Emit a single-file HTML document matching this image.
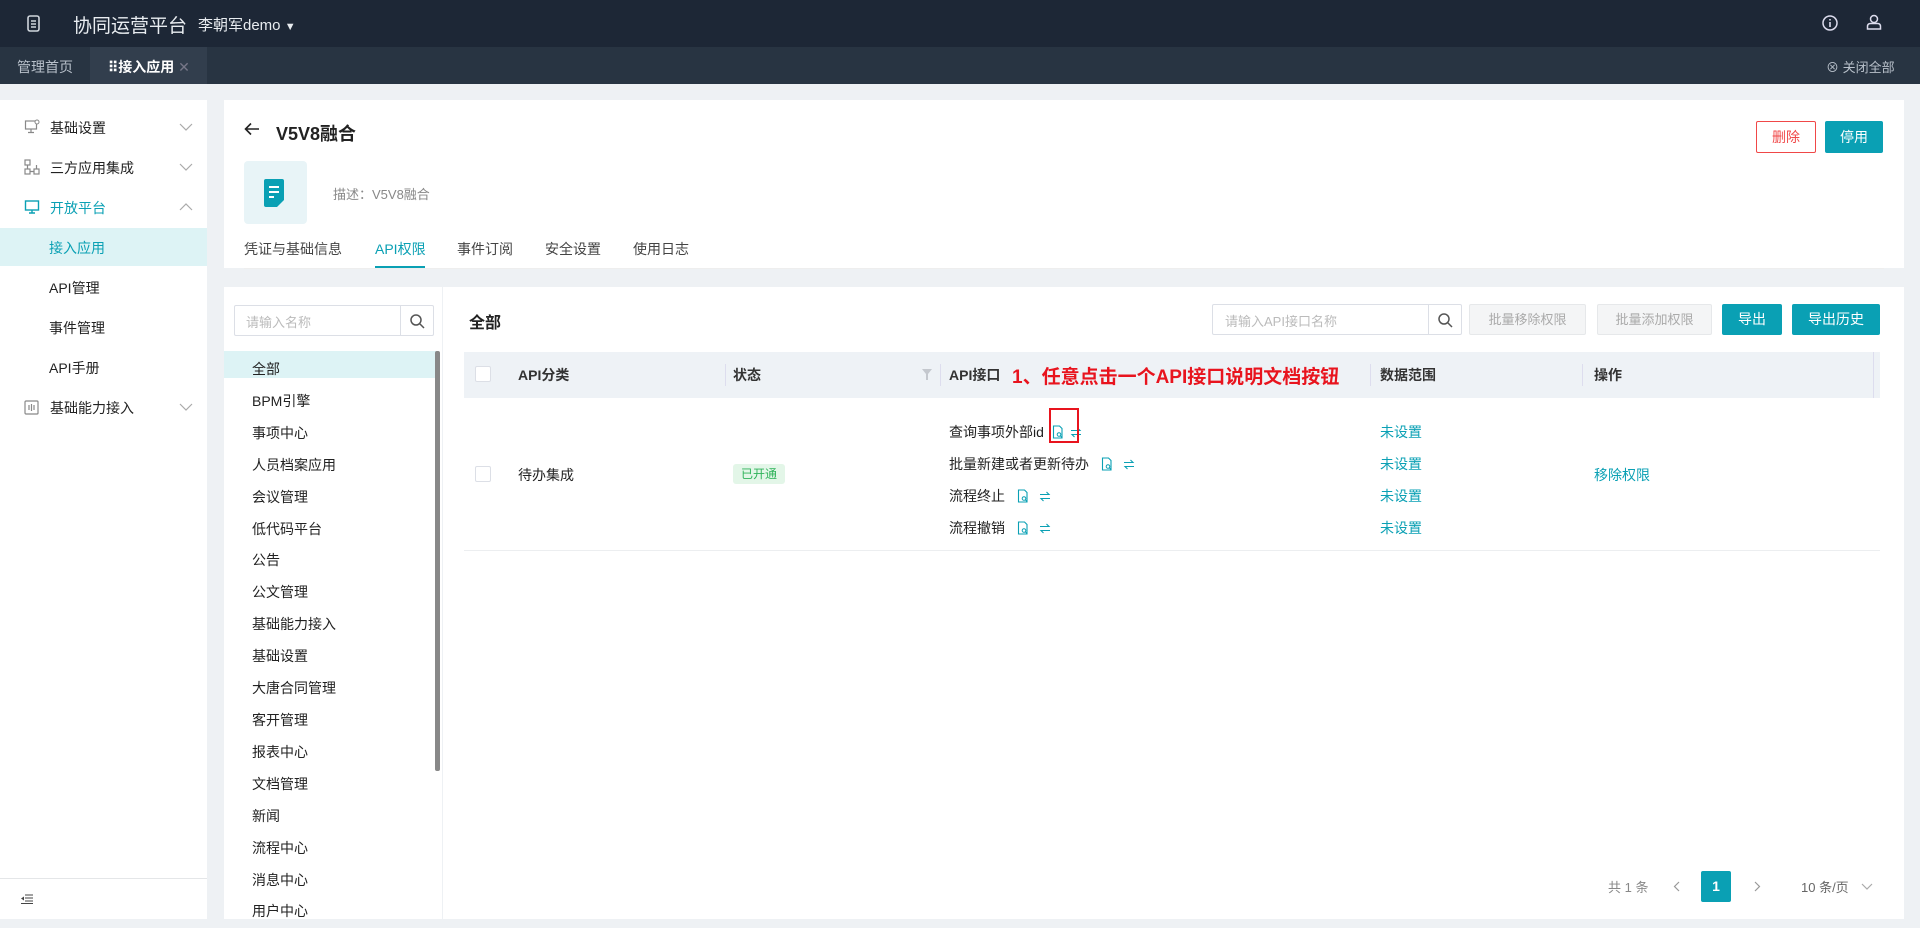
<!DOCTYPE html>
<html><head><meta charset="utf-8">
<style>
*{margin:0;padding:0;box-sizing:border-box}
body{width:1920px;height:919px;overflow:hidden;background:#eef1f4;font-family:"Liberation Sans","Noto Sans CJK SC",sans-serif;font-size:14px;color:#222;position:relative}
.a{position:absolute;white-space:nowrap}
.teal{color:#0aa0b4}
.btn{position:absolute;border-radius:2px;text-align:center;font-size:14px}
.ic{display:inline-block;vertical-align:-2px}
</style></head><body>
<svg width="0" height="0" style="position:absolute"><defs>
<g id="doc"><path d="M1.5 1h6l2.5 2.5V13h-8.5z" fill="none" stroke="#0aa0b4" stroke-width="1.1"/><circle cx="7" cy="9.5" r="1.8" fill="none" stroke="#0aa0b4" stroke-width="1"/><path d="M8.3 10.8l1.7 1.7" stroke="#0aa0b4"/></g>
<g id="sw"><path d="M1 4.5h9l-2.5-2.5M11 8.5H2l2.5 2.5" fill="none" stroke="#0aa0b4" stroke-width="1.1"/></g>
<g id="chd"><path d="M1 1l6 6 6-6" fill="none" stroke="#aaa" stroke-width="1.2"/></g>
<g id="chu"><path d="M1 7l6-6 6 6" fill="none" stroke="#aaa" stroke-width="1.2"/></g>
</defs></svg>
<!-- top bar -->
<div class="a" style="left:0;top:0;width:1920px;height:47px;background:#1d2736"></div>
<svg class="a" style="left:26px;top:15px" width="16" height="18" viewBox="0 0 16 18"><rect x="2" y="1" width="11" height="15" rx="2" fill="none" stroke="#cfd5dc" stroke-width="1.6"/><path d="M5 6h5M5 9h5M5 12h5" stroke="#cfd5dc" stroke-width="1.5"/></svg>
<div class="a" style="left:73px;top:11px;font-size:19px;color:#e8ecf0">协同运营平台</div>
<div class="a" style="left:198px;top:14px;font-size:15px;color:#e8ecf0">李朝军demo <span style="font-size:11px">▼</span></div>
<svg class="a" style="left:1821px;top:14px" width="18" height="18" viewBox="0 0 18 18"><circle cx="9" cy="9" r="7" fill="none" stroke="#dde" stroke-width="1.5"/><path d="M9 5v1.5M9 8v5" stroke="#dde" stroke-width="1.6"/></svg>
<svg class="a" style="left:1865px;top:13px" width="18" height="19" viewBox="0 0 18 19"><circle cx="9" cy="6" r="3.5" fill="none" stroke="#dde" stroke-width="1.5"/><path d="M2.5 16v-2.5q0-3 3-3h7q3 0 3 3V16z" fill="none" stroke="#dde" stroke-width="1.5"/></svg>
<!-- tab bar -->
<div class="a" style="left:0;top:47px;width:1920px;height:37px;background:#283442"></div>
<div class="a" style="left:17px;top:57px;color:#b8c0ca">管理首页</div>
<div class="a" style="left:90px;top:47px;width:117px;height:37px;background:#323e4d"></div>
<div class="a" style="left:108px;top:57px;color:#fff;font-weight:bold">⠿接入应用 <span style="color:#778;font-weight:normal">✕</span></div>
<div class="a" style="left:1826px;top:57px;color:#b8c0ca;font-size:13px">⊗ 关闭全部</div>
<!-- sidebar -->
<div class="a" style="left:0;top:100px;width:207px;height:819px;background:#fff"></div>
<svg class="a" style="left:24px;top:119px" width="16" height="16" viewBox="0 0 16 16"><rect x="1.5" y="2" width="11" height="8" fill="none" stroke="#888" stroke-width="1.2"/><path d="M7 10v3M4 13.5h6" stroke="#888" stroke-width="1.2"/><circle cx="13" cy="3" r="2" fill="#fff" stroke="#888"/></svg>
<div class="a" style="left:50px;top:118px">基础设置</div><svg class="a" style="left:179px;top:123px" width="14" height="8"><use href="#chd"/></svg>
<svg class="a" style="left:24px;top:159px" width="16" height="16" viewBox="0 0 16 16"><rect x="1" y="1" width="5" height="5" fill="none" stroke="#888" stroke-width="1.2"/><rect x="10" y="10" width="5" height="5" fill="none" stroke="#888" stroke-width="1.2"/><rect x="1" y="10" width="5" height="5" fill="none" stroke="#888" stroke-width="1.2"/><path d="M3.5 6v4M6 12.5h4M12.5 10V6" stroke="#888" stroke-width="1.2"/></svg>
<div class="a" style="left:50px;top:158px">三方应用集成</div><svg class="a" style="left:179px;top:163px" width="14" height="8"><use href="#chd"/></svg>
<svg class="a" style="left:24px;top:199px" width="16" height="16" viewBox="0 0 16 16"><rect x="1.5" y="2" width="13" height="9" fill="none" stroke="#0aa0b4" stroke-width="1.4"/><path d="M8 11v3M5 14h6" stroke="#0aa0b4" stroke-width="1.4"/></svg>
<div class="a teal" style="left:50px;top:198px">开放平台</div><svg class="a" style="left:179px;top:203px" width="14" height="8"><use href="#chu"/></svg>
<div class="a" style="left:0;top:228px;width:207px;height:38px;background:#ddf3f5"></div>
<div class="a teal" style="left:49px;top:238px">接入应用</div>
<div class="a" style="left:49px;top:278px">API管理</div>
<div class="a" style="left:49px;top:318px">事件管理</div>
<div class="a" style="left:49px;top:358px">API手册</div>
<svg class="a" style="left:24px;top:400px" width="15" height="15" viewBox="0 0 15 15"><rect x="1" y="1" width="13" height="13" rx="1" fill="none" stroke="#888" stroke-width="1.2"/><path d="M5 5v5M10 5v5M7.5 4v7" stroke="#888" stroke-width="1.2"/></svg>
<div class="a" style="left:50px;top:398px">基础能力接入</div><svg class="a" style="left:179px;top:403px" width="14" height="8"><use href="#chd"/></svg>
<div class="a" style="left:0;top:878px;width:207px;height:1px;background:#e4e6e8"></div>
<svg class="a" style="left:21px;top:894px" width="12" height="10" viewBox="0 0 12 10"><path d="M4 1h8M4 4h8M4 7h8M0 9.5h12" stroke="#444" stroke-width="1"/><path d="M3 2.5L0 4.5 3 6.5z" fill="#444"/></svg>
<!-- header card -->
<div class="a" style="left:224px;top:100px;width:1680px;height:168px;background:#fff"></div>
<svg class="a" style="left:244px;top:122px" width="16" height="14" viewBox="0 0 16 14"><path d="M15 7H2M7 1.5L1.5 7 7 12.5" fill="none" stroke="#222" stroke-width="1.6"/></svg>
<div class="a" style="left:276px;top:120px;font-size:18px;font-weight:bold">V5V8融合</div>
<div class="btn" style="left:1756px;top:121px;width:60px;height:32px;border:1px solid #f04848;color:#f04848;line-height:30px">删除</div>
<div class="btn" style="left:1825px;top:121px;width:58px;height:32px;background:#0aa0b4;color:#fff;line-height:32px">停用</div>
<div class="a" style="left:244px;top:161px;width:63px;height:63px;background:#e8f4f7;border-radius:4px"></div>
<svg class="a" style="left:263px;top:178px" width="24" height="30" viewBox="0 0 24 30"><path d="M3 1h16a2 2 0 0 1 2 2v19l-7 7H3a2 2 0 0 1-2-2V3a2 2 0 0 1 2-2z" fill="#0aa0b4"/><path d="M6 9h10M6 14h10M6 19h5" stroke="#fff" stroke-width="2"/></svg>
<div class="a" style="left:333px;top:184px;color:#888;font-size:13px">描述：V5V8融合</div>
<div class="a" style="left:244px;top:239px;color:#444">凭证与基础信息</div>
<div class="a teal" style="left:375px;top:239px">API权限</div>
<div class="a" style="left:375px;top:266px;width:50px;height:3px;background:#0aa0b4"></div>
<div class="a" style="left:457px;top:239px;color:#444">事件订阅</div>
<div class="a" style="left:545px;top:239px;color:#444">安全设置</div>
<div class="a" style="left:633px;top:239px;color:#444">使用日志</div>
<div class="a" style="left:244px;top:268px;width:1640px;height:1px;background:#eee"></div>
<!-- left list panel -->
<div class="a" style="left:224px;top:287px;width:218px;height:632px;background:#fff"></div>
<div class="a" style="left:234px;top:305px;width:200px;height:31px;border:1px solid #dcdfe6;border-radius:2px"></div>
<div class="a" style="left:246px;top:312px;color:#bbb;font-size:13px">请输入名称</div>
<div class="a" style="left:400px;top:305px;width:1px;height:31px;background:#dcdfe6"></div>
<svg class="a" style="left:409px;top:313px" width="16" height="16" viewBox="0 0 16 16"><circle cx="7" cy="7" r="5" fill="none" stroke="#555" stroke-width="1.5"/><path d="M11 11l4 4" stroke="#555" stroke-width="1.5"/></svg>
<div class="a" style="left:224px;top:351px;width:213px;height:27px;background:#ddf3f5"></div>
<div class="a" style="left:435px;top:351px;width:5px;height:420px;background:#888;border-radius:2px"></div>
<div class="a" style="left:252px;top:354px;line-height:31.9px;font-size:14px">全部<br>BPM引擎<br>事项中心<br>人员档案应用<br>会议管理<br>低代码平台<br>公告<br>公文管理<br>基础能力接入<br>基础设置<br>大唐合同管理<br>客开管理<br>报表中心<br>文档管理<br>新闻<br>流程中心<br>消息中心<br>用户中心</div>
<!-- table panel -->
<div class="a" style="left:443px;top:287px;width:1461px;height:632px;background:#fff"></div>
<div class="a" style="left:469px;top:309px;font-size:16px;font-weight:bold">全部</div>
<div class="a" style="left:1212px;top:304px;width:250px;height:31px;border:1px solid #dcdfe6;border-radius:2px"></div>
<div class="a" style="left:1225px;top:311px;color:#bbb;font-size:13px">请输入API接口名称</div>
<div class="a" style="left:1428px;top:304px;width:1px;height:31px;background:#dcdfe6"></div>
<svg class="a" style="left:1437px;top:312px" width="16" height="16" viewBox="0 0 16 16"><circle cx="7" cy="7" r="5" fill="none" stroke="#555" stroke-width="1.5"/><path d="M11 11l4 4" stroke="#555" stroke-width="1.5"/></svg>
<div class="btn" style="left:1469px;top:304px;width:117px;height:31px;background:#f4f5f6;border:1px solid #e6e8ea;color:#aaa;line-height:29px;font-size:13px">批量移除权限</div>
<div class="btn" style="left:1597px;top:304px;width:115px;height:31px;background:#f4f5f6;border:1px solid #e6e8ea;color:#aaa;line-height:29px;font-size:13px">批量添加权限</div>
<div class="btn" style="left:1722px;top:304px;width:60px;height:31px;background:#0aa0b4;color:#fff;line-height:31px">导出</div>
<div class="btn" style="left:1792px;top:304px;width:88px;height:31px;background:#0aa0b4;color:#fff;line-height:31px">导出历史</div>
<div class="a" style="left:464px;top:352px;width:1416px;height:46px;background:#eef2f6"></div>
<div class="a" style="left:475px;top:366px;width:16px;height:16px;background:#fff;border:1px solid #dcdfe6;border-radius:2px"></div>
<div class="a" style="left:518px;top:365px;font-weight:bold;color:#333">API分类</div>
<div class="a" style="left:725px;top:364px;width:1px;height:22px;background:#dde"></div>
<div class="a" style="left:733px;top:365px;font-weight:bold;color:#333">状态</div>
<svg class="a" style="left:922px;top:369px" width="10" height="11" viewBox="0 0 10 11"><path d="M0 0h10L6 5v6H4V5z" fill="#c4c8ce"/></svg>
<div class="a" style="left:940px;top:364px;width:1px;height:22px;background:#dde"></div>
<div class="a" style="left:949px;top:365px;font-weight:bold;color:#333">API接口</div>
<div class="a" style="left:1012px;top:362px;font-weight:bold;color:#e8141e;font-size:19px">1、任意点击一个API接口说明文档按钮</div>
<div class="a" style="left:1370px;top:364px;width:1px;height:22px;background:#dde"></div>
<div class="a" style="left:1380px;top:365px;font-weight:bold;color:#333">数据范围</div>
<div class="a" style="left:1582px;top:364px;width:1px;height:22px;background:#dde"></div>
<div class="a" style="left:1594px;top:365px;font-weight:bold;color:#333">操作</div>
<div class="a" style="left:1873px;top:352px;width:1px;height:46px;background:#dde"></div>
<div class="a" style="left:475px;top:466px;width:16px;height:16px;background:#fff;border:1px solid #dcdfe6;border-radius:2px"></div>
<div class="a" style="left:518px;top:465px">待办集成</div>
<div class="a" style="left:733px;top:464px;width:52px;height:20px;background:#e3f6e8;border-radius:3px;color:#2fb35a;font-size:12px;text-align:center;line-height:20px">已开通</div>
<div class="a" style="left:949px;top:416px;line-height:32px;font-size:14px">
查询事项外部id&nbsp;&nbsp;<svg class="ic" width="11" height="14"><use href="#doc"/></svg>&nbsp;&nbsp;<svg class="ic" width="12" height="13"><use href="#sw"/></svg><br>
批量新建或者更新待办&nbsp;&nbsp;&nbsp;<svg class="ic" width="11" height="14"><use href="#doc"/></svg>&nbsp;&nbsp;&nbsp;<svg class="ic" width="12" height="13"><use href="#sw"/></svg><br>
流程终止&nbsp;&nbsp;&nbsp;<svg class="ic" width="11" height="14"><use href="#doc"/></svg>&nbsp;&nbsp;&nbsp;<svg class="ic" width="12" height="13"><use href="#sw"/></svg><br>
流程撤销&nbsp;&nbsp;&nbsp;<svg class="ic" width="11" height="14"><use href="#doc"/></svg>&nbsp;&nbsp;&nbsp;<svg class="ic" width="12" height="13"><use href="#sw"/></svg></div>
<div class="a" style="left:1049px;top:408px;width:30px;height:35px;border:2px solid #e8141e"></div>
<div class="a teal" style="left:1380px;top:416px;line-height:32px">未设置<br>未设置<br>未设置<br>未设置</div>
<div class="a teal" style="left:1594px;top:465px">移除权限</div>
<div class="a" style="left:464px;top:550px;width:1416px;height:1px;background:#eceef0"></div>
<!-- pagination -->
<div class="a" style="left:1608px;top:877px;color:#888;font-size:13px">共 1 条</div>
<svg class="a" style="left:1673px;top:881px" width="7" height="11"><path d="M6 1L1.5 5.5 6 10" fill="none" stroke="#999" stroke-width="1.2"/></svg>
<div class="a" style="left:1701px;top:871px;width:30px;height:31px;background:#0aa0b4;color:#fff;text-align:center;line-height:31px;border-radius:2px;font-weight:bold">1</div>
<svg class="a" style="left:1754px;top:881px" width="7" height="11"><path d="M1 1l4.5 4.5L1 10" fill="none" stroke="#999" stroke-width="1.2"/></svg>
<div class="a" style="left:1801px;top:877px;color:#666;font-size:13px">10 条/页</div>
<svg class="a" style="left:1861px;top:883px" width="12" height="7"><path d="M1 1l5 5 5-5" fill="none" stroke="#aaa" stroke-width="1.2"/></svg>
</body></html>
